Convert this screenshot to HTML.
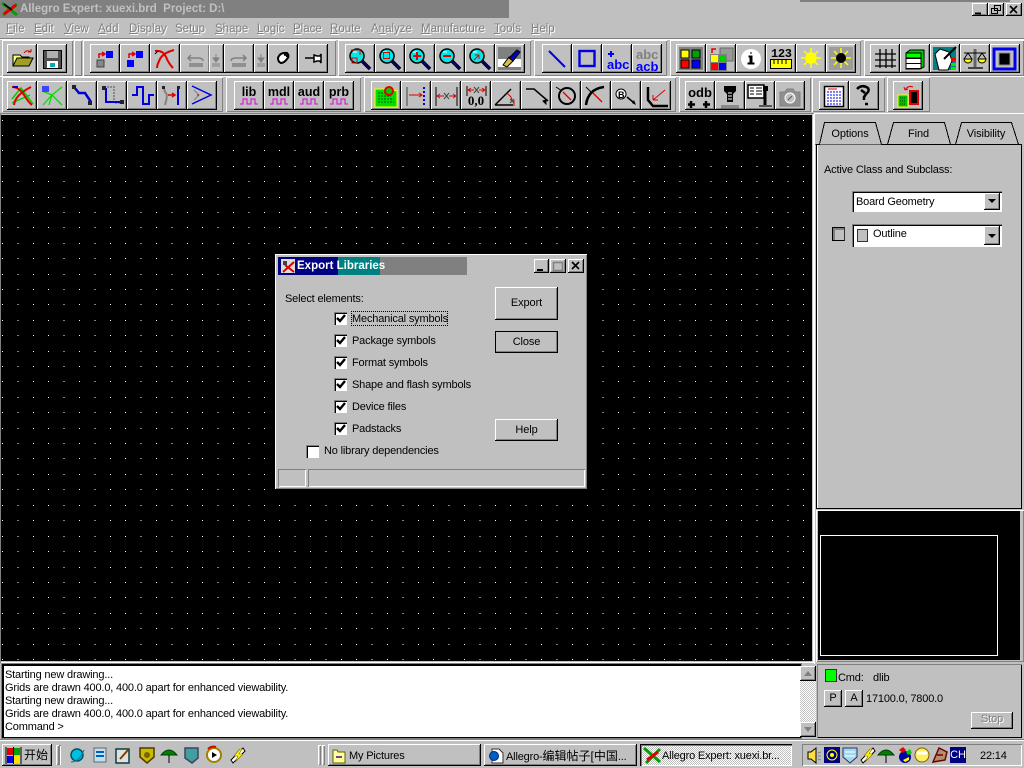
<!DOCTYPE html>
<html><head><meta charset="utf-8"><title>Allegro Expert</title>
<style>
html,body{margin:0;padding:0;background:#c0c0c0}
body{width:1024px;height:768px;overflow:hidden;position:relative;font:11px/14px "Liberation Sans","Noto Sans CJK SC",sans-serif;color:#000}
div{position:absolute;box-sizing:border-box}
.t{white-space:nowrap;letter-spacing:-.17px;margin-top:1px}
.t i{font-style:normal;font-size:12px;letter-spacing:0}
.m{top:22px;color:#808080;text-shadow:1px 1px 0 #fff;white-space:nowrap;font-size:11.5px}
.m u{text-decoration:underline}
.b{background:#c0c0c0;box-shadow:inset -1px -1px #000,inset 1px 1px #fff,inset -2px -2px #808080}
.r1{top:44px;height:29px;width:30px}
.r2{top:81px;height:29px;width:30px}
.bar{box-shadow:inset 1px 1px #fff,inset -1px -1px #808080}
.hd{width:3px;box-shadow:inset 1px 1px #fff,inset -1px -1px #808080;background:#c0c0c0}
.sunk{box-shadow:inset 1px 1px #808080,inset -1px -1px #fff}
.ck{width:13px;height:13px;background:#fff;box-shadow:inset 1px 1px #808080,inset 2px 2px #000,inset -1px -1px #fff}
.c{text-align:center;letter-spacing:-.1px}
svg{position:absolute;left:0;top:0}
</style></head><body>
<!-- title -->
<div style="left:0;top:0;width:509px;height:18px;background:#808080"></div>
<div class="t" style="left:20px;top:1px;color:#c0c0c0;font-weight:bold;font-size:11.5px;letter-spacing:0;white-space:pre">Allegro Expert: xuexi.brd  Project: D:\</div>
<div style="left:800px;top:0;width:210px;height:2px;background:#808080"></div>
<div class="b" style="left:972px;top:3px;width:16px;height:13px"></div>
<div class="b" style="left:988px;top:3px;width:16px;height:13px"></div>
<div class="b" style="left:1006px;top:3px;width:16px;height:13px"></div>
<!-- menu -->
<div class="m" style="left:6px"><u>F</u>ile</div><div class="m" style="left:34px"><u>E</u>dit</div><div class="m" style="left:64px"><u>V</u>iew</div><div class="m" style="left:98px"><u>A</u>dd</div><div class="m" style="left:129px"><u>D</u>isplay</div><div class="m" style="left:175px">Set<u>u</u>p</div><div class="m" style="left:215px"><u>S</u>hape</div><div class="m" style="left:257px"><u>L</u>ogic</div><div class="m" style="left:293px"><u>P</u>lace</div><div class="m" style="left:330px"><u>R</u>oute</div><div class="m" style="left:371px">A<u>n</u>alyze</div><div class="m" style="left:421px"><u>M</u>anufacture</div><div class="m" style="left:494px"><u>T</u>ools</div><div class="m" style="left:531px"><u>H</u>elp</div>
<!-- toolbar bars -->
<div style="left:0;top:38px;width:1024px;height:1px;background:#808080"></div>
<div style="left:0;top:39px;width:1024px;height:1px;background:#fff"></div>
<div class="bar" style="left:2px;top:40px;width:71px;height:36px"></div>
<div class="hd" style="left:74px;top:40px;width:8px;height:36px"></div>
<div class="bar" style="left:83px;top:40px;width:253px;height:36px"></div>
<div class="bar" style="left:338px;top:40px;width:193px;height:36px"></div>
<div class="bar" style="left:534px;top:40px;width:133px;height:36px"></div>
<div class="bar" style="left:670px;top:40px;width:191px;height:36px"></div>
<div class="bar" style="left:864px;top:40px;width:160px;height:36px"></div>
<div style="left:0;top:76px;width:1024px;height:1px;background:#fff"></div>
<div class="bar" style="left:2px;top:77px;width:221px;height:35px"></div>
<div class="bar" style="left:226px;top:77px;width:135px;height:35px"></div>
<div class="bar" style="left:364px;top:77px;width:312px;height:35px"></div>
<div class="bar" style="left:679px;top:77px;width:132px;height:35px"></div>
<div class="bar" style="left:812px;top:77px;width:73px;height:35px"></div>
<div class="bar" style="left:887px;top:77px;width:43px;height:35px"></div>
<!-- row1 buttons -->
<div class="b r1" style="left:7px"></div><div class="b r1" style="left:37px"></div>
<div class="b r1" style="left:90px"></div><div class="b r1" style="left:120px"></div><div class="b r1" style="left:150px"></div><div class="b r1" style="left:180px"></div><div class="b r1" style="left:209px;width:15px"></div><div class="b r1" style="left:224px"></div><div class="b r1" style="left:254px;width:14px"></div><div class="b r1" style="left:268px"></div><div class="b r1" style="left:298px"></div>
<div class="b r1" style="left:345px"></div><div class="b r1" style="left:375px"></div><div class="b r1" style="left:405px"></div><div class="b r1" style="left:435px"></div><div class="b r1" style="left:465px"></div><div class="b r1" style="left:495px"></div>
<div class="b r1" style="left:542px"></div><div class="b r1" style="left:572px"></div><div class="b r1" style="left:602px"></div><div class="b r1" style="left:632px"></div>
<div class="b r1" style="left:676px"></div><div class="b r1" style="left:706px"></div><div class="b r1" style="left:736px"></div><div class="b r1" style="left:766px"></div><div class="b r1" style="left:796px"></div><div class="b r1" style="left:826px"></div>
<div class="b r1" style="left:870px"></div><div class="b r1" style="left:900px"></div><div class="b r1" style="left:930px"></div><div class="b r1" style="left:960px"></div><div class="b r1" style="left:990px"></div>
<!-- row2 buttons -->
<div class="b r2" style="left:7px"></div><div class="b r2" style="left:37px"></div><div class="b r2" style="left:67px"></div><div class="b r2" style="left:97px"></div><div class="b r2" style="left:127px"></div><div class="b r2" style="left:157px"></div><div class="b r2" style="left:187px"></div>
<div class="b r2" style="left:234px"></div><div class="b r2" style="left:264px"></div><div class="b r2" style="left:294px"></div><div class="b r2" style="left:324px"></div>
<div class="b r2" style="left:371px"></div><div class="b r2" style="left:401px"></div><div class="b r2" style="left:431px"></div><div class="b r2" style="left:461px"></div><div class="b r2" style="left:491px"></div><div class="b r2" style="left:521px"></div><div class="b r2" style="left:551px"></div><div class="b r2" style="left:581px"></div><div class="b r2" style="left:611px"></div><div class="b r2" style="left:641px"></div>
<div class="b r2" style="left:685px"></div><div class="b r2" style="left:715px"></div><div class="b r2" style="left:745px"></div><div class="b r2" style="left:775px"></div>
<div class="b r2" style="left:819px"></div><div class="b r2" style="left:849px"></div>
<div class="b r2" style="left:893px"></div>
<!-- canvas -->
<div style="left:0;top:113px;width:814px;height:550px;box-shadow:inset 1px 1px #808080,inset -1px -1px #fff"></div>
<div style="left:1px;top:115px;width:811px;height:546px;background:#000"></div>
<svg width="1024" height="768" style="top:0;left:0"><path fill="none" stroke="#fff" stroke-width="1" stroke-dasharray="1 14.4" shape-rendering="crispEdges" d="M2 120.5H811M2 135.5H811M2 150.5H811M2 166.5H811M2 181.5H811M2 197.5H811M2 212.5H811M2 227.5H811M2 243.5H811M2 258.5H811M2 274.5H811M2 289.5H811M2 304.5H811M2 320.5H811M2 335.5H811M2 351.5H811M2 366.5H811M2 381.5H811M2 397.5H811M2 412.5H811M2 428.5H811M2 443.5H811M2 458.5H811M2 474.5H811M2 489.5H811M2 505.5H811M2 520.5H811M2 536.5H811M2 551.5H811M2 567.5H811M2 582.5H811M2 597.5H811M2 613.5H811M2 628.5H811M2 644.5H811M2 659.5H811"/></svg>
<!-- right panel -->
<div style="left:814px;top:113px;width:210px;height:551px;background:#c0c0c0;box-shadow:inset 1px 1px #fff"></div>
<div style="left:816px;top:144px;width:206px;height:365px;border:1px solid #000;border-top:0;background:#c0c0c0;box-shadow:inset 1px 0 #fff"></div>
<svg width="1024" height="768"><g fill="#c0c0c0" stroke="#000" stroke-width="1" shape-rendering="crispEdges"><path d="M817.5 144.5H955.5L961.5 122.5H1011.5L1018.5 144.5H1021.5" /><path d="M887.5 144.5L893.5 122.5H944.5L950.5 144.5"/><path d="M817.5 144.5L824.5 122.5H875.5L881.5 144.5" stroke="none"/><path d="M815.5 144.5H819.5L824.5 122.5H875.5L881.5 144.5H1021.5" fill="none"/></g><path d="M820 143.5H880.5" stroke="#c0c0c0" stroke-width="1.5" shape-rendering="crispEdges"/></svg>
<div class="t c" style="left:824px;top:126px;width:52px">Options</div>
<div class="t c" style="left:893px;top:126px;width:51px">Find</div>
<div class="t c" style="left:961px;top:126px;width:50px">Visibility</div>
<div class="t" style="left:824px;top:162px">Active Class and Subclass:</div>
<div style="left:852px;top:191px;width:150px;height:21px;background:#fff;box-shadow:inset 1px 1px #808080,inset 2px 2px #000,inset -1px -1px #fff"></div>
<div class="t" style="left:856px;top:194px">Board Geometry</div>
<div class="b" style="left:984px;top:193px;width:16px;height:17px"></div>
<div style="left:852px;top:224px;width:150px;height:23px;background:#fff;box-shadow:inset 1px 1px #808080,inset 2px 2px #000,inset -1px -1px #fff"></div>
<div style="left:857px;top:229px;width:11px;height:13px;background:#c0c0c0;border:1px solid #333"></div>
<div class="t" style="left:873px;top:226px">Outline</div>
<div class="b" style="left:984px;top:226px;width:16px;height:19px"></div>
<div style="left:832px;top:227px;width:13px;height:14px;background:#c0c0c0;border:1px solid #000;border-right-color:#333;box-shadow:inset 2px 2px #808080"></div>
<!-- preview -->
<div style="left:816px;top:510px;width:208px;height:152px;box-shadow:inset 1px 1px #fff,inset -1px -1px #808080"></div>
<div style="left:818px;top:511px;width:202px;height:149px;background:#000"></div>
<div style="left:820px;top:535px;width:178px;height:121px;border:1px solid #fff;border-width:1px 1px 1px 1px"></div>
<!-- console -->
<div style="left:2px;top:664px;width:799px;height:74px;background:#fff;border:1px solid #000;box-shadow:inset 1px 1px #000;outline:1px solid #808080"></div>
<div class="t" style="left:5px;top:667px">Starting new drawing...</div>
<div class="t" style="left:5px;top:680px">Grids are drawn 400.0, 400.0 apart for enhanced viewability.</div>
<div class="t" style="left:5px;top:693px">Starting new drawing...</div>
<div class="t" style="left:5px;top:706px">Grids are drawn 400.0, 400.0 apart for enhanced viewability.</div>
<div class="t" style="left:5px;top:719px">Command &gt;</div>
<div style="left:800px;top:666px;width:16px;height:71px;background:repeating-conic-gradient(#fff 0 25%,#c0c0c0 0 50%) 0 0/2px 2px"></div>
<div class="b" style="left:800px;top:666px;width:16px;height:15px"></div>
<div class="b" style="left:800px;top:722px;width:16px;height:15px"></div>
<!-- cmd panel -->
<div style="left:817px;top:664px;width:205px;height:74px;background:#c0c0c0;box-shadow:inset 1px 1px #808080,inset -1px -1px #000"></div>
<div style="left:825px;top:669px;width:12px;height:13px;background:#0f0;border:1px solid #333"></div>
<div class="t" style="left:838px;top:670px">Cmd:</div>
<div class="t" style="left:873px;top:670px">dlib</div>
<div class="b c" style="left:824px;top:690px;width:18px;height:17px;line-height:16px">P</div>
<div class="b c" style="left:845px;top:690px;width:18px;height:17px;line-height:16px">A</div>
<div class="t" style="left:866px;top:691px">17100.0, 7800.0</div>
<div class="b c" style="left:971px;top:712px;width:42px;height:17px;line-height:15px;color:#808080;text-shadow:1px 1px 0 #fff">Stop</div>
<!-- taskbar -->
<div style="left:0;top:739px;width:1024px;height:1px;background:#808080"></div>
<div style="left:0;top:740px;width:1024px;height:1px;background:#fff"></div>
<div class="b" style="left:2px;top:744px;width:50px;height:22px"></div>
<div class="t" style="left:24px;top:747px;font-size:12px;letter-spacing:0">开始</div>
<div class="hd" style="left:56px;top:745px;height:20px"></div>
<div class="sunk" style="left:59px;top:745px;width:2px;height:20px"></div>
<div class="hd" style="left:318px;top:745px;height:20px"></div>
<div class="hd" style="left:322px;top:745px;height:20px"></div>
<div class="b" style="left:328px;top:744px;width:153px;height:22px"></div>
<div class="t" style="left:349px;top:748px">My Pictures</div>
<div class="b" style="left:484px;top:744px;width:153px;height:22px"></div>
<div class="t" style="left:506px;top:748px">Allegro-<i>编辑帖子[中国</i>...</div>
<div style="left:640px;top:744px;width:152px;height:22px;background:repeating-conic-gradient(#fff 0 25%,#c0c0c0 0 50%) 0 0/2px 2px;box-shadow:inset 1px 1px #000,inset 2px 2px #808080,inset -1px -1px #fff"></div>
<div class="t" style="left:662px;top:748px">Allegro Expert: xuexi.br...</div>
<div class="sunk" style="left:802px;top:744px;width:220px;height:22px"></div>
<div class="c" style="left:950px;top:747px;width:16px;height:16px;background:#000080;color:#fff;font-size:11px;line-height:16px">CH</div>
<div class="t" style="left:980px;top:748px">22:14</div>
<!-- ICONS -->
<svg width="1024" height="768">
<defs>
<g id="lens"><path d="M17 17L25 25" stroke="#000" stroke-width="3.5"/><path d="M17 17L25 25" stroke="#0000a0" stroke-width="1.5"/><circle cx="12" cy="12" r="7" fill="#00e8e8" stroke="#000" stroke-width="1.5"/><path d="M8 8h4" stroke="#fff"/></g>
<g id="sq"><path d="M9 20h14M9 22h14M11 17l-3-3 3-3M8 14h10q5 0 5 3" fill="none" stroke="#808080" stroke-width="1.5"/></g>
<g id="dn"><path d="M3 20h8M3 22h8" stroke="#808080"/><path d="M7 10v6M4 14l3 4 3-4z" fill="#808080" stroke="#808080"/></g>
<path id="wave" d="M0 6h3V1h4v5h4V1h4v5h3" fill="none" stroke="#e000e0"/>
</defs>
<!-- window -->
<path d="M975 13.500h6" stroke="#000" stroke-width="2"/><path d="M994.500 5.500h6v5h-6zM991.500 8.500h6v5h-6z" fill="#c0c0c0" stroke="#000"/><path d="M1010 6l7 7M1017 6l-7 7" stroke="#000" stroke-width="1.600"/>
<!-- app logo -->
<g><path d="M2 3L17 15M3 15L17 4" stroke="#00a000" stroke-width="3"/><path d="M4 14L16 5" stroke="#e00000" stroke-width="3"/><path d="M4 4l8 6" stroke="#000" stroke-width="1.5"/></g>
<!-- row1 -->
<g transform="translate(7,44)"><path d="M6 22V11h7l2 2h7v9z" fill="#ffff80" stroke="#000"/><path d="M6 22l4-8h16l-4 8z" fill="#a0a020" stroke="#000"/><path d="M17 9q3-4 7-1M24 8v-3M24 8h-3" fill="none" stroke="#e00000"/></g>
<g transform="translate(37,44)"><rect x="6.5" y="6.5" width="18" height="18" fill="#505050" stroke="#000"/><rect x="10" y="7" width="11" height="7" fill="#b0b0b0"/><rect x="10" y="17" width="11" height="7" fill="#fff"/><rect x="13" y="19" width="5" height="4" fill="#00b0b0"/></g>
<g transform="translate(90,44)"><path d="M9 14v-4h5M12 8l3 2-3 2" fill="none" stroke="#e00000" stroke-width="1.5"/><rect x="16" y="7" width="7" height="7" fill="#00f"/><rect x="7" y="16" width="7" height="7" fill="#888" stroke="#444"/></g>
<g transform="translate(120,44)"><path d="M9 14v-4h5M12 8l3 2-3 2" fill="none" stroke="#e00000" stroke-width="1.5"/><rect x="16" y="7" width="7" height="7" fill="#00f"/><rect x="7" y="16" width="7" height="7" fill="#00f"/></g>
<g transform="translate(150,44)" fill="none" stroke="#e00000" stroke-width="2"><path d="M5 7q8-1 11 6t7 11"/><path d="M24 6q-11 3-14 9t-3 9"/><path d="M5 10l3-3" stroke="#000" stroke-width="1"/></g>
<use href="#sq" transform="translate(180,44)"/><use href="#dn" transform="translate(209,44)"/>
<g transform="translate(224,44)"><path d="M8 20h14M8 22h14M19 17l3-3-3-3M22 14h-10q-5 0-5 3" fill="none" stroke="#808080" stroke-width="1.5"/></g>
<use href="#dn" transform="translate(254,44)"/>
<g transform="translate(268,44)"><path d="M10 14q2-6 9-5 3 3 0 6-3 4-6 4-3-1-3-5z" fill="#fff" stroke="#000" stroke-width="2"/><path d="M16 11q3-1 3 2" stroke="#000" stroke-width="2" fill="none"/></g>
<g transform="translate(298,44)"><path d="M7 14h9" stroke="#000" stroke-width="1.5"/><path d="M16 11l3 1h3l1-2v9l-1-2h-3l-3 1z" fill="#fff" stroke="#000" stroke-width="1.5"/></g>
<use href="#lens" x="345" y="44"/><path d="M352 58h5v5h-5z" fill="none" stroke="#e00000"/><path d="M351 50h9v5" fill="none" stroke="#e00000"/>
<use href="#lens" x="375" y="44"/><rect x="383.500" y="52.500" width="6" height="6" fill="none" stroke="#e00000"/>
<use href="#lens" x="405" y="44"/><path d="M417 52v8M413 56h8" stroke="#e00000" stroke-width="2"/>
<use href="#lens" x="435" y="44"/><path d="M443 56h8" stroke="#e00000" stroke-width="2"/>
<use href="#lens" x="465" y="44"/><path d="M474 60l5-5M475 55h4v4M480 50q4 0 4 5" fill="none" stroke="#e00000"/>
<g transform="translate(495,44)"><rect x="3" y="3" width="23" height="23" fill="#808080"/><rect x="3" y="15" width="23" height="8" fill="#fff"/><path d="M8 21l6-8 4 4-6 6z" fill="#d8c040" stroke="#000"/><path d="M14 14l8-8 3 2-7 9z" fill="#0000c0" stroke="#000"/></g>
<path d="M549 51L565 67" stroke="#0000e0" stroke-width="2"/>
<rect x="579.500" y="51" width="15" height="15" fill="none" stroke="#0000e0" stroke-width="2.400"/>
<g font-family="Liberation Sans" font-weight="bold"><text x="607" y="69" font-size="13" fill="#00f">abc</text><path d="M611 51v6M608 54h6" stroke="#00f" stroke-width="2"/>
<text x="636" y="59" font-size="13" fill="#808080">abc</text><text x="636" y="71" font-size="13" fill="#00f">acb</text></g>
<g transform="translate(676,44)"><rect x="3" y="3" width="24" height="23" fill="#808080"/><rect x="5" y="6" width="8" height="8" fill="#ff0" stroke="#000"/><rect x="16" y="6" width="8" height="8" fill="#00a000" stroke="#000"/><rect x="5" y="16" width="8" height="8" fill="#f00" stroke="#000"/><rect x="16" y="16" width="8" height="8" fill="#00f" stroke="#000"/></g>
<g transform="translate(706,44)"><rect x="14" y="4" width="13" height="13" fill="#999" stroke="#666"/><rect x="4" y="10" width="17" height="17" fill="#808080"/><rect x="5" y="11" width="7" height="7" fill="#ff0"/><rect x="13" y="11" width="7" height="7" fill="#0c0"/><rect x="5" y="19" width="7" height="7" fill="#f00"/><rect x="13" y="19" width="7" height="7" fill="#00f"/><path d="M6 9V5h4" fill="none" stroke="#e00000" stroke-width="1.5"/></g>
<g transform="translate(736,44)"><circle cx="15" cy="15" r="10" fill="#fff"/><path d="M15 8v2M13 12h3v7h2v1h-6v-1h2v-6h-1z" fill="#000" stroke="#000"/></g>
<g transform="translate(766,44)"><text x="5" y="13" font-family="Liberation Mono" font-weight="bold" font-size="12" fill="#000" textLength="21">123</text><rect x="4.500" y="15.500" width="21" height="9" fill="#ff0" stroke="#000"/><path d="M8 16v4M12 16v4M16 16v4M20 16v4" stroke="#000"/></g>
<g transform="translate(796,44)" stroke="#ff0" stroke-width="1.5"><circle cx="15" cy="14" r="5" fill="#ff0"/><path d="M15 4v20M5 14h20M8 7l14 14M22 7L8 21"/></g>
<g transform="translate(826,44)"><rect x="3" y="3" width="24" height="23" fill="#9c9c9c"/><g stroke="#ff0" stroke-width="1.500"><path d="M15 4v20M5 14h20M8 7l14 14M22 7L8 21"/></g><circle cx="15" cy="14" r="5" fill="#000"/></g>
<g transform="translate(870,44)" stroke="#000" stroke-width="1.300"><path d="M10 5v19M16 5v19M22 5v19M5 10h21M5 16h21M5 22h21"/></g>
<g transform="translate(900,44)" stroke="#000"><path d="M6 9l4-3h14v17l-4 2H6z" fill="#0c0"/><rect x="6" y="9" width="15" height="5" fill="#0f0"/><rect x="6" y="14.500" width="15" height="5" fill="#fff"/><rect x="6" y="19.500" width="15" height="5" fill="#fff"/></g>
<g transform="translate(930,44)"><rect x="3" y="3" width="23" height="23" fill="#008080"/><path d="M5 10l5-5 9 3 3 9-4 9H9z" fill="#fff" stroke="#000"/><path d="M14 15L26 3" stroke="#000" stroke-width="2"/><rect x="21" y="14" width="5" height="3" fill="#e00"/><rect x="21" y="19" width="5" height="3" fill="#0e0"/><rect x="21" y="23" width="5" height="3" fill="#0e0"/></g>
<g transform="translate(960,44)"><path d="M15 5v18" stroke="#666" stroke-width="3"/><path d="M8 24h15" stroke="#444" stroke-width="2"/><path d="M4 9h22" stroke="#000"/><path d="M4 15a4 4 0 008 0zM18 15a4 4 0 008 0z" fill="#ff0" stroke="#000"/><path d="M8 9l-4 6M8 9l4 6M22 9l-4 6M22 9l4 6" stroke="#000" fill="none"/></g>
<g transform="translate(990,44)"><rect x="4" y="5" width="21" height="20" fill="none" stroke="#00e" stroke-width="3"/><rect x="9" y="9" width="11" height="12" fill="#000" stroke="#888"/></g>
<!-- row2 -->
<g transform="translate(7,81)" fill="none"><path d="M5 18L14 7l12 16M5 22l18-8" stroke="#00d000" stroke-width="1.500"/><path d="M5 6q7 0 12 8t8 10M24 6Q8 14 7 24" stroke="#e00000" stroke-width="2"/><path d="M6 6h5" stroke="#0000e0" stroke-width="2"/></g>
<g transform="translate(37,81)" fill="none"><path d="M6 24L15 14 25 24M15 14l10-8M5 10l10 4M15 14l-3 10" stroke="#00e000" stroke-width="1.300"/><rect x="5" y="5" width="7" height="6" fill="#4040ff"/></g>
<g transform="translate(67,81)"><path d="M7 6l5 6h6l6 9" fill="none" stroke="#0000d0" stroke-width="2.500"/><rect x="5" y="4" width="4" height="4" fill="#222"/><rect x="21" y="20" width="4" height="4" fill="#222"/></g>
<g transform="translate(97,81)"><path d="M7 6h10v16h8" fill="none" stroke="#888" stroke-width="2" stroke-dasharray="2 1"/><path d="M9 7v14h15" fill="none" stroke="#0000d0" stroke-width="2"/><rect x="5" y="5" width="4" height="4" fill="#222"/><rect x="23" y="19" width="4" height="4" fill="#222"/></g>
<g transform="translate(127,81)"><path d="M5 14h5V6h6v17h6v-9h5" fill="none" stroke="#0000e0" stroke-width="2"/></g>
<g transform="translate(157,81)"><path d="M7 6q0 4 2 6t-1 12" fill="none" stroke="#808080" stroke-width="2"/><path d="M21 7v17" stroke="#0000e0" stroke-width="2"/><path d="M11 14h7M15 12l3 2-3 2" fill="none" stroke="#e00000" stroke-width="1.500"/><rect x="5" y="5" width="3" height="3" fill="#222"/><rect x="20" y="5" width="3" height="3" fill="#222"/></g>
<g transform="translate(187,81)"><path d="M5 5l19 9-19 9" fill="none" stroke="#0000e0" stroke-width="1.500"/><path d="M7 9l5 5-5 5" fill="none" stroke="#808080"/><path d="M10 14h2" stroke="#e00000"/></g>
<g font-family="Liberation Sans" font-weight="bold" font-size="12.500" fill="#000" text-anchor="middle"><text x="249" y="96">lib</text><text x="279" y="96">mdl</text><text x="309" y="96">aud</text><text x="339" y="96">prb</text><text x="700" y="97" font-size="13">odb</text></g>
<text x="476" y="105" font-family="Liberation Serif" font-weight="bold" font-size="13" text-anchor="middle">0,0</text>
<use href="#wave" x="240" y="98"/><use href="#wave" x="270" y="98"/><use href="#wave" x="300" y="98"/><use href="#wave" x="330" y="98"/>
<path d="M691 101v7M688 104.500h7M706 101v7M703 104.500h7" stroke="#000" stroke-width="2.500"/>
<g transform="translate(371,81)"><path d="M4 8h14l8 2v16H4z" fill="#00e000" stroke="#ff0"/><path d="M7 12h13M7 15h13M7 18h16M7 21h16" stroke="#005000" stroke-dasharray="2 1"/><circle cx="18" cy="10" r="4" fill="#0c0" stroke="#e00000" stroke-width="2"/></g>
<g transform="translate(401,81)"><path d="M6 6v19" stroke="#808080" stroke-width="2"/><path d="M8 14h13M18 12l3 2-3 2" fill="none" stroke="#e00000"/><path d="M23 6v20" stroke="#0000e0" stroke-width="2" stroke-dasharray="2 2"/></g>
<g transform="translate(431,81)"><path d="M5 6v19M26 6v19" stroke="#000"/><path d="M6 15h7M6 15l3-2M6 15l3 2M18 15h7M25 15l-3-2M25 15l-3 2" fill="none" stroke="#e00000"/><path d="M13 12l5 6M18 12l-5 6" stroke="#444"/></g>
<g transform="translate(461,81)"><path d="M6 5v10M25 5v10" stroke="#000"/><path d="M7 9h6M18 9h6M7 9l3-2M7 9l3 2M24 9l-3-2M24 9l-3 2" fill="none" stroke="#e00000"/><path d="M13 6l5 6M18 6l-5 6" stroke="#444"/></g>
<g transform="translate(491,81)"><path d="M4 24L20 8M4 24h18" fill="none" stroke="#000" stroke-width="1.500"/><path d="M16 12l4 4 1 3M23 19v6" fill="none" stroke="#e00000"/><path d="M19 18l4 4M23 18l-4 4" stroke="#444"/></g>
<g transform="translate(521,81)"><path d="M5 8h8l14 12" fill="none" stroke="#000" stroke-width="1.500"/><path d="M22 20l3 3v-4z" stroke="#000"/></g>
<g transform="translate(551,81)"><circle cx="16" cy="15" r="8" fill="none" stroke="#000" stroke-width="2"/><path d="M5 6l6 4" stroke="#000"/><path d="M12 11l8 8" stroke="#e00000" stroke-width="1.300"/></g>
<g transform="translate(581,81)"><path d="M5 24Q7 8 23 6" fill="none" stroke="#000" stroke-width="2.500"/><path d="M5 6l6 6" stroke="#000"/><path d="M12 12l9 9" stroke="#e00000" stroke-width="1.300"/></g>
<g transform="translate(611,81)"><circle cx="10" cy="13" r="5" fill="#fff" stroke="#000"/><text x="7" y="17" font-family="Liberation Sans" font-size="9" font-weight="bold">B</text><path d="M16 16l6 5" stroke="#000" stroke-width="1.500"/><path d="M21 22l4 2-2-5z" fill="#000"/></g>
<g transform="translate(641,81)"><path d="M7 6v13l5 6h15" fill="none" stroke="#000" stroke-width="2.500"/><path d="M12 19L24 9M12 19v-5M12 19h5" fill="none" stroke="#e00000"/></g>
<g transform="translate(715,81)"><path d="M6 25h18M6 27h18" stroke="#555"/><path d="M9 5h12v5l-3 3v8h-6v-8l-3-3z" fill="#000"/><path d="M13 12h4M13 15h4M13 18h4" stroke="#fff"/></g>
<g transform="translate(745,81)"><rect x="3" y="4" width="16" height="13" fill="#fff" stroke="#000" stroke-width="1.500"/><path d="M5 7h4M5 10h4M5 13h4M11 7h6M11 10h6M11 13h6" stroke="#000"/><rect x="18" y="5" width="5" height="5" fill="#000"/><path d="M20 10v14" stroke="#000" stroke-width="3"/><path d="M14 25h13" stroke="#555" stroke-width="2"/></g>
<g transform="translate(775,81)"><path d="M5 11h5l2-3h6l2 3h5v14H5z" fill="#909090" stroke="#808080"/><circle cx="15" cy="17" r="5" fill="#c0c0c0" stroke="#fff"/><path d="M13 19l4-4" stroke="#555"/></g>
<g transform="translate(819,81)"><rect x="5.500" y="5.500" width="19" height="20" fill="#fff" stroke="#000" stroke-width="1.500"/><path d="M9 8h9" stroke="#e00000"/><path d="M8 11h14M8 14h14M8 17h14M8 20h14M8 23h14" stroke="#0000e0" stroke-dasharray="2 1"/></g>
<g transform="translate(849,81)"><path d="M8 8q5-5 11-1 2 3-2 6l-2 3v3" fill="none" stroke="#000" stroke-width="2.500"/><path d="M12 9l4 3M16 23h3" stroke="#000" stroke-width="2.500"/></g>
<g transform="translate(893,81)"><rect x="5" y="14" width="10" height="12" fill="#00c000" stroke="#ff0"/><path d="M7 17h6M7 20h6M7 23h6" stroke="#004000" stroke-dasharray="1 1"/><rect x="17" y="10" width="8" height="13" fill="#000" stroke="#e00000" stroke-width="2"/><path d="M20 6q-5-2-8 3M12 9l-1-3M12 9l3-1" fill="none" stroke="#e00000"/></g>
<!-- combos and scroll arrows -->
<path d="M988 199h8l-4 4z" fill="#000"/><path d="M988 234h8l-4 4z" fill="#000"/>
<path d="M804 676h8l-4-5z" fill="#808080"/><path d="M804 727h8l-4 5z" fill="#808080"/>
<!-- start flag -->
<g><rect x="7" y="748" width="6" height="7" fill="#e00000"/><rect x="14" y="748" width="6" height="7" fill="#00a000"/><rect x="7" y="756" width="6" height="7" fill="#0000e0"/><rect x="14" y="756" width="6" height="7" fill="#ffe000"/><path d="M6 747v17M13.500 747v17M21 747v17" stroke="#000"/></g>
<!-- quick launch -->
<g><circle cx="77" cy="755" r="6" fill="#00c0e0" stroke="#005060" stroke-width="1.500"/><path d="M71 762q8 0 13-12" stroke="#0080a0" fill="none"/><rect x="94" y="748" width="12" height="14" fill="#c0e0f0" stroke="#666"/><path d="M96 752h8M96 756h8" stroke="#0060c0" stroke-width="2"/><rect x="116" y="749" width="13" height="14" fill="#e0e0e0" stroke="#004040" stroke-width="1.500"/><path d="M120 759l8-9" stroke="#804000" stroke-width="2"/><path d="M140 748h14v9l-7 6-7-6z" fill="#c0c000" stroke="#603000" stroke-width="1.500"/><circle cx="147" cy="755" r="3" fill="#806000"/><path d="M161 755q8-10 16 0z" fill="#008000" stroke="#004000"/><path d="M169 755v8" stroke="#000"/><path d="M185 748h13v10l-6 5-7-5z" fill="#40a0a0" stroke="#404060" stroke-width="1.500"/><circle cx="214" cy="755" r="7" fill="#fff" stroke="#a08000" stroke-width="2"/><path d="M208 749a8 8 0 018-2" stroke="#e00000" stroke-width="2" fill="none"/><path d="M212 752l5 3-5 3z"/><path d="M231 760l12-12 2 3-12 12z" fill="#fff" stroke="#000"/><path d="M240 749l-6 7h4l-3 6 8-8h-4l3-5z" fill="#ff0" stroke="#806000" stroke-width=".6"/></g>
<!-- task icons -->
<g><path d="M333 750h4l1 2h7v11h-12z" fill="#ffffa0" stroke="#606000"/><path d="M336 757h6" stroke="#804080" stroke-width="2"/><path d="M492 749h7l4 4v10h-11z" fill="#fff" stroke="#333"/><circle cx="494" cy="756" r="4.500" fill="#0060c0" stroke="#002080"/><path d="M644 748l16 14M646 763l14-14" stroke="#00a000" stroke-width="3"/><path d="M647 760l11-8" stroke="#e00000" stroke-width="3"/></g>
<!-- tray -->
<g><path d="M808 752h3l5-4v15l-5-4h-3z" fill="#ffe040" stroke="#000"/><path d="M818 753l3-1M818 756h3M818 759l3 1" stroke="#808080"/><rect x="824" y="747" width="16" height="16" fill="#000080"/><circle cx="832" cy="755" r="5" fill="none" stroke="#ff0"/><circle cx="832" cy="755" r="2" fill="#ff0"/><path d="M843 748h14v9l-7 6-7-6z" fill="#a0d8f0" stroke="#303060"/><path d="M845 752h10M845 756h10" stroke="#fff"/><path d="M861 760l12-12 2 3-12 12z" fill="#fff" stroke="#000"/><path d="M870 749l-6 7h4l-3 6 8-8h-4l3-5z" fill="#ff0" stroke="#806000" stroke-width=".6"/><path d="M878 755q8-10 16 0z" fill="#008000" stroke="#004000"/><path d="M886 755v8" stroke="#000"/><circle cx="905" cy="757" r="6" fill="#0000a0"/><path d="M899 750l4-3 3 3-3 3z" fill="#e00"/><path d="M906 752l4-3 2 4-4 2z" fill="#0c0"/><path d="M903 760l6-3v3l-4 2z" fill="#ff0"/><circle cx="922" cy="755" r="7" fill="#fff060" stroke="#806000"/><path d="M917 753h10" stroke="#fff" stroke-width="3"/><path d="M933 762l6-14 8 4-2 8zM937 755h6" fill="#b09070" stroke="#700000" stroke-width="1.500"/></g>
</svg>
<!-- dialog -->
<div style="left:275px;top:254px;width:312px;height:235px;background:#c0c0c0;box-shadow:inset 1px 1px #fff,inset -1px -1px #808080,0 0 0 1px #000"></div>
<div style="left:278px;top:257px;width:60px;height:18px;background:#000080"></div>
<div style="left:338px;top:257px;width:42px;height:18px;background:#008080"></div>
<div style="left:380px;top:257px;width:87px;height:18px;background:#808080"></div>
<div class="t" style="left:297px;top:258px;color:#fff;font-weight:bold;font-size:11.5px;letter-spacing:0">Export Libraries</div>
<div class="b" style="left:534px;top:259px;width:15px;height:14px"></div>
<div class="b" style="left:550px;top:259px;width:16px;height:14px"></div>
<div class="b" style="left:568px;top:259px;width:16px;height:14px"></div>
<div class="t" style="left:285px;top:291px">Select elements:</div>
<div class="b c" style="left:495px;top:287px;width:63px;height:33px;line-height:33px">Export</div>
<div class="b c" style="left:495px;top:331px;width:63px;height:22px;line-height:22px;outline:1px solid #000;outline-offset:-1px">Close</div>
<div class="b c" style="left:495px;top:419px;width:63px;height:22px;line-height:22px">Help</div>
<div class="ck" style="left:334px;top:312px"></div><div class="ck" style="left:334px;top:334px"></div><div class="ck" style="left:334px;top:356px"></div><div class="ck" style="left:334px;top:378px"></div><div class="ck" style="left:334px;top:400px"></div><div class="ck" style="left:334px;top:422px"></div><div class="ck" style="left:306px;top:445px"></div>
<div style="left:351px;top:311px;width:97px;height:15px;border:1px dotted #000"></div>
<div class="t" style="left:352px;top:311px">Mechanical symbols</div>
<div class="t" style="left:352px;top:333px">Package symbols</div>
<div class="t" style="left:352px;top:355px">Format symbols</div>
<div class="t" style="left:352px;top:377px">Shape and flash symbols</div>
<div class="t" style="left:352px;top:399px">Device files</div>
<div class="t" style="left:352px;top:421px">Padstacks</div>
<div class="t" style="left:324px;top:443px">No library dependencies</div>
<div class="sunk" style="left:278px;top:469px;width:28px;height:18px"></div>
<div class="sunk" style="left:308px;top:469px;width:277px;height:18px"></div>
<svg width="1024" height="768">
<path d="M337 318l3 3 5-6M337 340l3 3 5-6M337 362l3 3 5-6M337 384l3 3 5-6M337 406l3 3 5-6M337 428l3 3 5-6" fill="none" stroke="#000" stroke-width="2.400"/>
<g><rect x="281" y="259" width="14" height="14" fill="#ddd"/><path d="M283 272l11-10M285 265l9 7" stroke="#e00000" stroke-width="2"/><rect x="283" y="261" width="4" height="4" fill="#444"/></g>
<path d="M537 270h6" stroke="#000" stroke-width="2"/><rect x="553.500" y="262.500" width="9" height="8" fill="none" stroke="#808080" stroke-width="1.500"/><path d="M572 262l7 7M579 262l-7 7" stroke="#000" stroke-width="1.600"/>
</svg>
</body></html>
